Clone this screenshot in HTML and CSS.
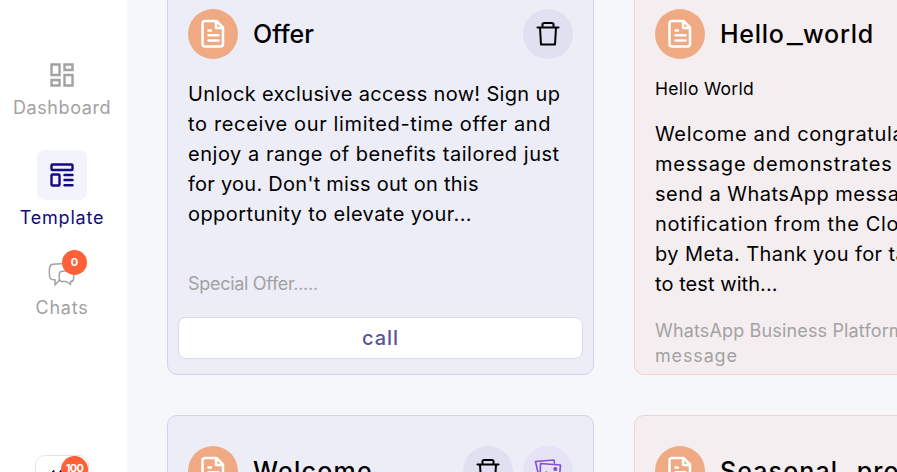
FILE: index.html
```html
<!DOCTYPE html>
<html lang="en">
<head>
<meta charset="utf-8">
<title>Templates</title>
<link rel="stylesheet" href="styles.css">
</head>
<body>
<svg class="defs" aria-hidden="true">
  <symbol id="doc" viewBox="0 0 24 30"><path d="M4 2h11.500l6.500 6.500V25a2.500 2.500 0 0 1-2.500 2.500H4A2.500 2.500 0 0 1 1.500 25V4.500A2.500 2.500 0 0 1 4 2zM15 2.500V9h6.500M7.500 11.500h2.500M7.500 16.300h10M7.500 21.500h10" fill="none" stroke="#fff" stroke-width="2.500" stroke-linecap="round" stroke-linejoin="round"/></symbol>
  <symbol id="trash" viewBox="0 0 24 26"><path d="M1.500 6.500h21M4 6.500l1 17h14l1-17M6.500 6V3.500q0-1.500 1.500-1.500h8q1.500 0 1.500 1.500V6" fill="none" stroke="#000" stroke-width="2" stroke-linecap="round" stroke-linejoin="round"/></symbol>
</svg>
<div class="app">
  <nav class="sidebar">
    <a class="item">
      <span class="tile"><svg width="26" height="26" viewBox="0 0 26 26" fill="none" stroke="#a2a2a2" stroke-width="2.400"><path d="M2.500 2.500h8v10.500h-8zM15.500 2.500h8v5.500h-8zM2.500 18h8v5.500h-8zM15.500 13h8v10.500h-8z"/></svg></span>
      <span class="label dash">Dashboard</span>
    </a>
    <a class="item active">
      <span class="tile"><svg width="26" height="26" viewBox="0 0 26 26" fill="none" stroke="#140a80" stroke-width="2.400" stroke-linecap="round"><rect x="2.500" y="2.500" width="21" height="5.500" rx="1"/><rect x="2.500" y="12.500" width="8" height="11" rx="1"/><path d="M15.500 13h8M15.500 18h8M15.500 23.200h8"/></svg></span>
      <span class="label temp">Template</span>
    </a>
    <a class="item chat">
      <span class="tile"><svg width="30" height="30" viewBox="0 0 30 30" fill="none" stroke="#a2a2a2" stroke-width="1.500" stroke-linejoin="round"><path d="M17 4.500L6 5.200Q3 5.400 2.600 8.500Q2 13 2.700 18Q3 21 8 20.800V26L12.500 21"/><path d="M14 12.500Q20 11 26 12.500Q27.200 16 26.500 20.500Q26 22.500 23.500 22.500V25.500L19.500 22.500H14.500Q12 22 12.200 17Q12.200 13 14 12.500z"/></svg><b class="badge">0</b></span>
      <span class="label chats">Chats</span>
    </a>
    <div class="account"><svg width="24" height="16" viewBox="0 0 24 16"><path d="M2.500 5.500L5 3.200V9zM10 6l2-3 2 4" fill="#140a80" stroke="#140a80"/></svg><b class="badge count">100</b></div>
  </nav>
  <main class="cards">
    <article class="card">
      <header class="head"><span class="round orange"><svg width="24" height="30"><use href="#doc"/></svg></span><h2 class="t-offer">Offer</h2><span class="round end"><svg width="24" height="26"><use href="#trash"/></svg></span></header>
      <p class="body"><span class="a1">Unlock exclusive access now! Sign up</span><span class="a2">to receive our limited-time offer and</span><span class="a3">enjoy a range of benefits tailored just</span><span class="a4">for you. Don't miss out on this</span><span class="a5">opportunity to elevate your...</span></p>
      <p class="foot offer"><span class="f1">Special Offer.....</span></p>
      <button class="call">call</button>
    </article>
    <article class="card pink">
      <header class="head"><span class="round orange"><svg width="24" height="30"><use href="#doc"/></svg></span><h2 class="t-hello">Hello<span class="bar">_</span>world</h2></header>
      <p class="lead"><span class="l1">Hello World</span></p>
      <p class="body"><span class="b1">Welcome and congratulations!! This</span><span class="b2">message demonstrates your</span><span class="b3">send a WhatsApp message</span><span class="b4">notification from the Cloud API,</span><span class="b5">by Meta. Thank you for taking</span><span class="b6">to test with...</span></p>
      <p class="foot"><span class="f2">WhatsApp Business Platform sample</span><span class="f3">message</span></p>
    </article>
    <article class="card">
      <header class="head"><span class="round orange"><svg width="24" height="30"><use href="#doc"/></svg></span><h2 class="t-welcome">Welcome</h2><span class="round end"><svg width="24" height="26"><use href="#trash"/></svg></span><span class="round violet"><svg width="28" height="26" viewBox="0 0 28 26" fill="none" stroke="#8150d8" stroke-width="1.600" stroke-linejoin="round"><path d="M6.500 5.500L26.500 7L25 24L6 22zM5 19L1.500 3.500L20 2L20.500 5.500M8 20l4.500-6 4.500 6 3-3 5 5"/><circle cx="21.300" cy="11" r="1.300" fill="#8150d8"/></svg></span></header>
    </article>
    <article class="card pink">
      <header class="head"><span class="round orange"><svg width="24" height="30"><use href="#doc"/></svg></span><h2 class="t-season">Seasonal<span class="bar">_</span>promo</h2></header>
    </article>
  </main>
</div>
</body>
</html>
```
FILE: styles.css
```css
* { box-sizing: border-box; }
body { margin: 0; background: #f5f7fb; color: #000; font-family: Inter, "Open Sans", sans-serif; overflow: hidden; }
p, h2 { margin: 0; }
svg { display: block; flex: none; }
.defs { position: absolute; width: 0; height: 0; }
.app { display: flex; height: 472px; overflow: hidden; }
.sidebar { flex: none; width: 127px; padding: 50px 3px 0 0; background: #fff; display: flex; flex-direction: column; align-items: center; }
.item { flex: none; display: flex; flex-direction: column; align-items: center; height: 100px; color: #a2a2a2; }
.item.active { color: #140a80; }
.item.chat { margin-top: -1px; }
.tile { position: relative; flex: none; width: 50px; height: 50px; border-radius: 8px; display: flex; align-items: center; justify-content: center; }
.active .tile { background: #f3f3fd; }
.label { margin-top: -6px; font-size: 18px; line-height: 27px; white-space: nowrap; }
.active .label { margin-top: 4px; }
.chat .label { margin-top: -5px; }
.dash { letter-spacing: .6px; }
.temp { letter-spacing: .8px; }
.chats { letter-spacing: .8px; }
.badge { position: absolute; left: 25px; top: 1px; width: 25px; height: 25px; border-radius: 50%; background: #ff6038; color: #fff; font-size: 11px; line-height: 24px; text-align: center; }
.account { position: relative; flex: none; width: 54px; height: 50px; margin-top: 106px; border: 1px solid #e4e4e8; border-radius: 10px; padding: 11px 0 0 13px; }
.badge.count { left: 25px; top: 0; width: 27px; height: 27px; line-height: 25px; letter-spacing: -.7px; }
.cards { flex: none; display: grid; grid-template-columns: 427px 427px; grid-auto-rows: 397px; gap: 40px; margin: -22px 0 0 40px; }
.card { background: #ededf8; border: 1px solid #d4d0f0; border-radius: 10px; padding: 30px 20px 0; overflow: hidden; }
.pink { background: #f5eef1; border-color: #f8cfca; }
.head { display: flex; align-items: center; height: 50px; }
.head h2 { margin: 0 auto 0 15px; font-size: 25px; line-height: 40px; font-weight: 500; white-space: nowrap; }
.head .t-hello { letter-spacing: .7px; }
.head .t-welcome { letter-spacing: 1.25px; }
.head .t-season { letter-spacing: 1.1px; }
.bar { display: inline-block; margin: 0 3px 0 4px; letter-spacing: 0; transform: scaleX(1.4); }
.round { flex: none; display: flex; align-items: center; justify-content: center; width: 50px; height: 50px; border-radius: 50%; background: #e1e0f0; }
.orange { background: #efa983; }
.violet { background: #e7e3f7; margin-left: 10px; }
.body { margin-top: 20px; font-size: 20px; line-height: 30px; }
.body span, .foot span, .lead span { display: block; white-space: nowrap; }
.a1 { letter-spacing: .34px; }
.a2 { letter-spacing: .65px; }
.a3 { letter-spacing: .53px; }
.a4 { letter-spacing: .26px; }
.a5 { letter-spacing: .43px; }
.b1 { letter-spacing: .65px; }
.b2 { letter-spacing: .85px; }
.b3 { letter-spacing: .5px; }
.b4 { letter-spacing: .65px; }
.b5 { letter-spacing: .4px; }
.b6 { letter-spacing: .07px; }
.foot { margin-top: 19px; font-size: 18px; line-height: 25px; color: #a2a2a2; }
.foot.offer { margin-top: 42px; }
.f1 { letter-spacing: -.3px; }
.f2 { letter-spacing: .15px; }
.f3 { letter-spacing: .85px; }
.lead { margin-top: 17px; font-size: 17.500px; line-height: 25px; }
.l1 { letter-spacing: .3px; }
.lead + .body { margin-top: 18px; }
.call { display: block; width: 405px; height: 42px; margin: 21px -10px 0; padding: 0; background: #fff; border: 1px solid #dcd9ee; border-radius: 8px; color: #5a5594; font: 500 20px/38px Inter, "Open Sans", sans-serif; letter-spacing: .9px; }
```
